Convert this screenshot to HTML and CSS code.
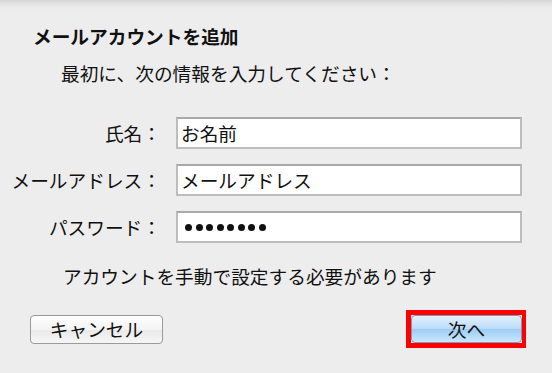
FILE: index.html
```html
<!DOCTYPE html>
<html lang="ja">
<head>
    <meta charset="UTF-8">
    <meta name="viewport" content="width=device-width, initial-scale=1.0">
    <title>メールアカウントを追加</title>
    <link rel="stylesheet" href="styles.css">
</head>
<body>
    <div class="dialog">
        <h1 class="title">メールアカウントを追加</h1>
        <p class="intro">最初に、次の情報を入力してください：</p>

        <div class="form">
            <label class="field-label" for="name">氏名：</label>
            <div class="field"><span class="field-text">お名前</span></div>

            <label class="field-label" for="mail">メールアドレス：</label>
            <div class="field"><span class="field-text">メールアドレス</span></div>

            <label class="field-label" for="pass">パスワード：</label>
            <div class="field">
                <span class="dots">
                    <i></i><i></i><i></i><i></i><i></i><i></i><i></i><i></i>
                </span>
            </div>
        </div>

        <p class="note">アカウントを手動で設定する必要があります</p>

        <div class="buttons">
            <button class="btn btn-cancel">キャンセル</button>
            <span class="highlight">
                <button class="btn btn-next">次へ</button>
            </span>
        </div>
    </div>
</body>
</html>
```

FILE: styles.css
```css
body {
    margin: 0;
    background: #ededed;
    font-family: "Noto Sans CJK JP", "Noto Sans", sans-serif;
    color: #111;
}
.dialog {
    height: 373px;
    box-sizing: border-box;
    padding: 24px 26px 0 0;
    background: linear-gradient(#d6d6d6 0, #e9e9e9 6px, #ededed 10px);
}
.title {
    margin: 0 0 0 33px;
    font-size: 18.7px;
    font-weight: bold;
    line-height: 24px;
}
.intro {
    margin: 13px 0 0 61px;
    font-size: 18.7px;
    line-height: 24px;
}
.form {
    display: grid;
    grid-template-columns: 161px 346px;
    column-gap: 15px;
    row-gap: 15px;
    align-items: center;
    margin-top: 32px;
}
.field-label {
    text-align: right;
    font-size: 18.7px;
    line-height: 24px;
}
.field {
    height: 32px;
    box-sizing: border-box;
    background: #fff;
    border: 2px solid #bdbdbd;
    border-top-color: #a9a9a9;
    display: flex;
    align-items: center;
    padding-left: 3px;
}
.field-text {
    font-size: 18.7px;
    line-height: 24px;
}
.dots {
    display: flex;
    gap: 3.5px;
    padding-left: 4px;
}
.dots i {
    width: 7px;
    height: 7px;
    border-radius: 50%;
    background: #111;
}
.note {
    margin: 21px 0 0 63px;
    font-size: 18.7px;
    line-height: 24px;
}
.buttons {
    display: flex;
    justify-content: space-between;
    align-items: center;
    margin: 22px 0 0 30px;
}
.btn {
    font-family: inherit;
    font-size: 18.7px;
    line-height: 20px;
    color: #111;
    border-radius: 4px;
    padding: 0;
    height: 29px;
}
.btn-cancel {
    width: 133px;
    border: 1px solid #9a9a9a;
    background: linear-gradient(#ffffff, #f3f3f3 50%, #e9e9e9 51%, #f6f6f6);
}
.highlight {
    display: flex;
    border: 5px solid #f00;
    border-right-width: 4px;
}
.btn-next {
    display: block;
    width: 111px;
    height: 28px;
    border: 1px solid #7d9cbd;
    background: linear-gradient(#e3f1fd, #bcdcf8 48%, #9fcdf5 52%, #c8e8fe);
}
```
